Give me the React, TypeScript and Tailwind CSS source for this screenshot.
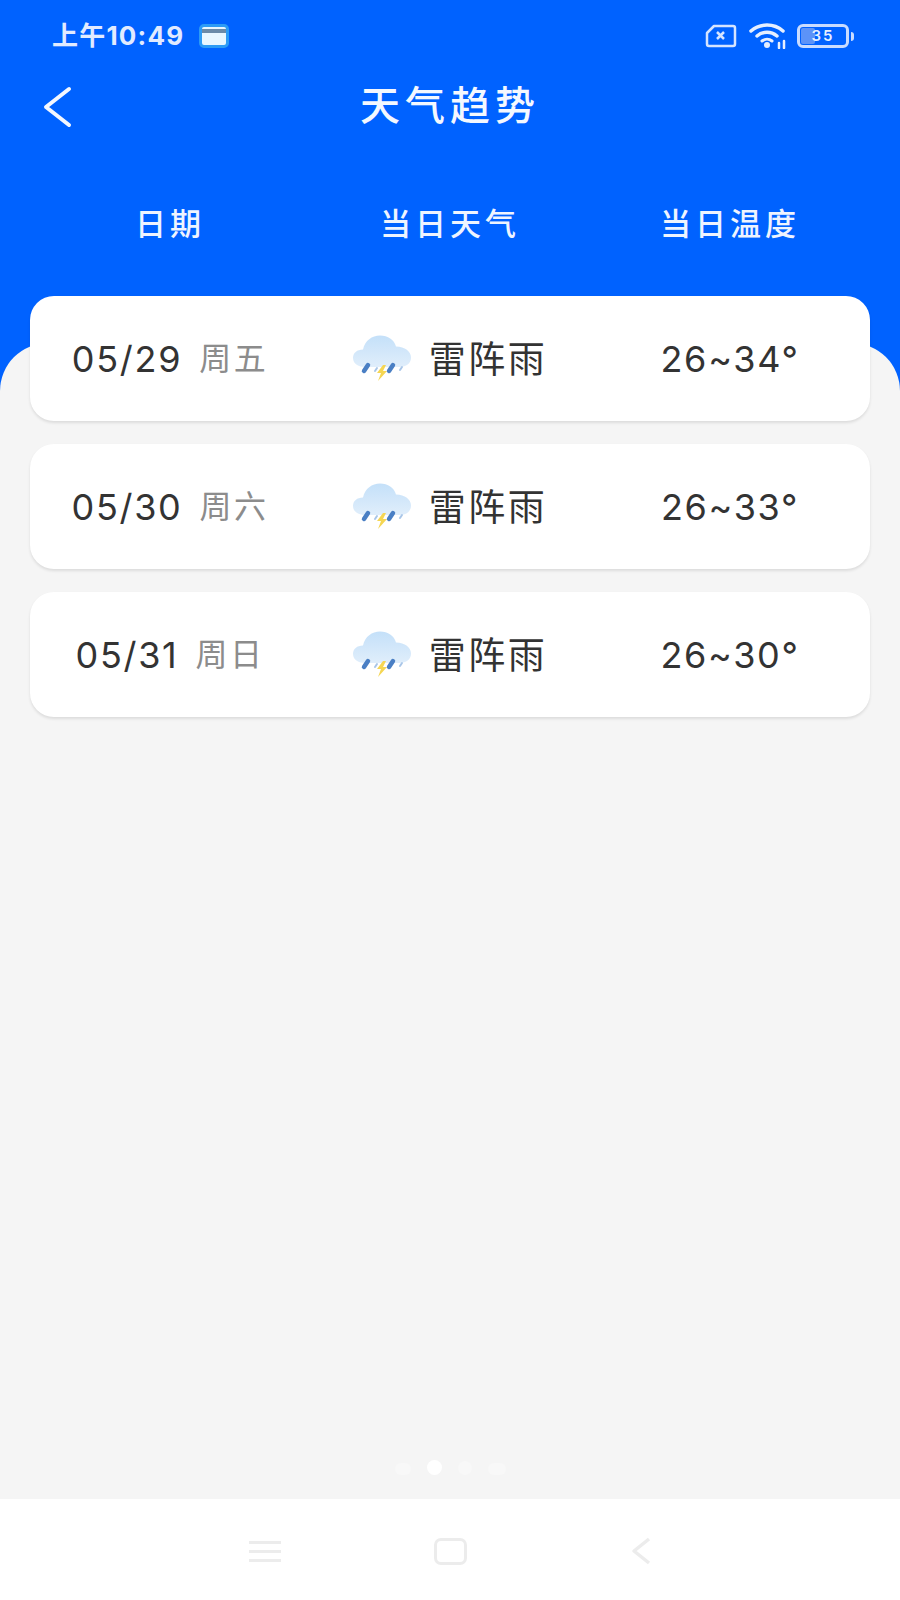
const rows = [
  { date: "05/29", week: "周五", temp: "26~34°" },
  { date: "05/30", week: "周六", temp: "26~33°" },
  { date: "05/31", week: "周日", temp: "26~30°" },
];

function StormIcon() {
  return (
    <svg width="62" height="50" viewBox="0 0 60 50" className="shrink-0">
      <defs>
        <linearGradient id="cloud" x1="0" y1="0" x2="0" y2="1">
          <stop offset="0" stopColor="#c4e0f9" />
          <stop offset="1" stopColor="#e0eefb" />
        </linearGradient>
      </defs>
      <path d="M13 33c-6 0-12-3-12-9 0-5 4-8.500 10-8.500 2-9 9-14 17-14 8 0 14 4 16 11 9 0 15 5 15 11 0 6-5 9.500-11 9.500z" fill="url(#cloud)" />
      <path d="M16 31l-4 6M41 31l-4 6" stroke="#4a7fc4" strokeWidth="4.500" strokeLinecap="round" />
      <path d="M25 34l-2 3M50 33l-2 3" stroke="#a9c6e8" strokeWidth="2" strokeLinecap="round" />
      <path d="M31 31l-6 8h4l-3 8 9-10h-4l3-6z" fill="#f5d653" />
    </svg>
  );
}

function SimCard() {
  return (
    <svg width="32" height="24" viewBox="0 0 32 24" fill="none" stroke="#d5e4ff" strokeWidth="2.500">
      <path d="M9 2h19a2 2 0 012 2v16a2 2 0 01-2 2H4a2 2 0 01-2-2V9z" strokeLinejoin="round" />
      <path d="M12 8l7 7M19 8l-7 7" strokeWidth="2.500" />
    </svg>
  );
}

function Wifi() {
  return (
    <svg width="38" height="26" viewBox="0 0 38 26" fill="none" stroke="#e6efff" strokeLinecap="round">
      <path d="M2 8c9-8 23-8 32 0" strokeWidth="3.500" />
      <path d="M8 13c6-5 14-5 20 0" strokeWidth="3.500" />
      <path d="M13 18c3-2.500 7-2.500 10 0" strokeWidth="3" />
      <circle cx="18" cy="22" r="3" fill="#e6efff" stroke="none" />
      <path d="M30 20v5M35 18v7" strokeWidth="2.500" />
    </svg>
  );
}

function Battery() {
  return (
    <div className="flex items-center gap-[2px]">
      <div className="relative flex h-[24px] w-[52px] items-center justify-center overflow-hidden rounded-[6px] border-[3px] border-[#c9dcff]">
        <div className="absolute inset-y-[1px] left-[1px] w-[14px] rounded-[2px] bg-[#5c93f8]" />
        <span className="relative text-[15px] font-semibold tracking-[2px] text-[#e6efff]">35</span>
      </div>
      <div className="h-[9px] w-[3px] rounded-r-full bg-[#c9dcff]" />
    </div>
  );
}

export default function App() {
  return (
    <div className="flex min-h-[1600px] w-[900px] flex-col bg-[#0062ff] font-['Inter','Noto_Sans_CJK_SC',sans-serif]">
      {/* Status bar */}
      <div className="flex h-[72px] items-center justify-between pl-[52px] pr-[46px]">
        <div className="flex items-center gap-[15px]">
          <span className="text-[26px] font-bold leading-none tracking-[1.200px] text-[#e1ebff]">上午10:49</span>
          <div className="flex h-[24px] w-[30px] flex-col overflow-hidden rounded-[5px] border-[3px] border-[#2c9bf5] bg-[#e8f6ff]">
            <div className="mt-[2px] h-[4px] bg-[#6b8aa8]" />
          </div>
        </div>
        <div className="flex items-center gap-[10px]">
          <div className="mr-[2px]">
            <SimCard />
          </div>
          <Wifi />
          <Battery />
        </div>
      </div>

      {/* Title */}
      <div className="relative flex h-[68px] items-center justify-center">
        <svg width="34" height="44" viewBox="0 0 34 44" fill="none" className="absolute left-[41px] top-[13px]">
          <path d="M28 4L5 22l23 18" stroke="#f4f8ff" strokeWidth="4" strokeLinecap="round" strokeLinejoin="round" />
        </svg>
        <h1 className="text-[40px] font-medium leading-none tracking-[5px] text-[#f4f8ff]">天气趋势</h1>
      </div>

      {/* Column titles */}
      <div className="mt-[50px] grid h-[68px] grid-cols-3 items-center px-[30px] text-center text-[31px] font-medium tracking-[4px] text-[#eef4ff]">
        <span>日期</span>
        <span>当日天气</span>
        <span>当日温度</span>
      </div>

      <div className="mt-[85px] flex flex-1 flex-col rounded-t-[48px] bg-[#f5f5f5]">
        {/* Forecast rows */}
        <div className="-mt-[47px] flex flex-col gap-[23px] px-[30px]">
          {rows.map((row) => (
            <div
              key={row.date}
              className="grid h-[125px] grid-cols-3 items-center rounded-[24px] bg-white pt-[1px] shadow-[0_2px_3px_rgba(0,0,0,0.1)]"
            >
              <div className="flex items-center justify-center gap-[17px]">
                <span className="text-[36px] leading-none tracking-[1.700px] text-[#333333]">{row.date}</span>
                <span className="text-[32px] leading-none tracking-[2.500px] text-[#8c8c8c]">{row.week}</span>
              </div>
              <div className="flex items-center justify-center gap-[16px] pr-[2px]">
                <StormIcon />
                <span className="text-[37px] leading-none tracking-[2.500px] text-[#333333]">雷阵雨</span>
              </div>
              <div className="text-center text-[36px] leading-none tracking-[1.700px] text-[#333333]">{row.temp}</div>
            </div>
          ))}
        </div>

        {/* Pager dots */}
        <div className="mt-auto flex h-[39px] items-start justify-center gap-[16px]">
          <span className="mt-[3px] h-[12px] w-[16px] rounded-full bg-[#f8f8f8]" />
          <span className="h-[15px] w-[15px] rounded-full bg-white" />
          <span className="mt-[1px] h-[14px] w-[14px] rounded-full bg-[#f8f8f8]" />
          <span className="mt-[3px] h-[12px] w-[18px] rounded-full bg-[#f8f8f8]" />
        </div>
      </div>

      {/* Navigation bar */}
      <div className="flex h-[101px] items-start justify-center bg-white pt-[37px]">
        <div className="flex w-[402px] items-center justify-between">
          <div className="flex w-[32px] flex-col gap-[6px]">
            <span className="h-[3px] bg-[#ececec]" />
            <span className="h-[3px] bg-[#ececec]" />
            <span className="h-[3px] bg-[#ececec]" />
          </div>
          <div className="mr-[12px] h-[27px] w-[33px] rounded-[7px] border-[3px] border-[#ececec]" />
          <svg width="20" height="30" viewBox="0 0 20 30" fill="none">
            <path d="M18 3L3 15l15 12" stroke="#ececec" strokeWidth="3.500" strokeLinejoin="round" />
          </svg>
        </div>
      </div>
    </div>
  );
}
